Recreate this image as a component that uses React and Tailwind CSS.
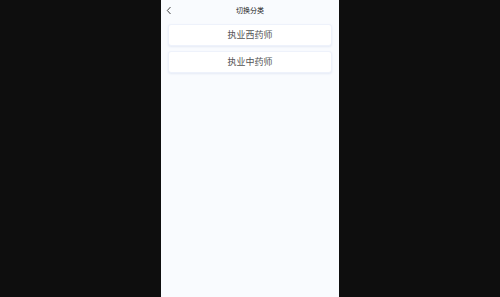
export default function App() {
  return (
    <div
      className="w-[500px] h-[297px] bg-[#0e0e0e] flex justify-center"
      style={{ fontFamily: '"Noto Sans", "Noto Sans CJK SC", sans-serif' }}
    >
      <div className="w-[178px] h-full bg-[#f9fbfe] flex flex-col">
        <div className="h-[20px] flex items-center relative">
          <svg
            className="absolute left-[5px] top-[6px]"
            width="6"
            height="9"
            viewBox="0 0 6 9"
            fill="none"
          >
            <path d="M4.5 1 L1.3 4.5 L4.5 8" stroke="#444" strokeWidth="1" />
          </svg>
          <div className="flex-1 text-center text-[7px] text-[#222] leading-none">切换分类</div>
        </div>
        <div className="flex flex-col gap-[5px] px-[7px] pt-[4px]">
          <div className="h-[22px] bg-white rounded-[3px] border border-[#eef2fb] shadow-[0_1px_2px_rgba(200,210,235,0.4)] flex items-center justify-center text-[9px] text-[#555]">
            执业西药师
          </div>
          <div className="h-[22px] bg-white rounded-[3px] border border-[#eef2fb] shadow-[0_1px_2px_rgba(200,210,235,0.4)] flex items-center justify-center text-[9px] text-[#555]">
            执业中药师
          </div>
        </div>
      </div>
    </div>
  );
}
